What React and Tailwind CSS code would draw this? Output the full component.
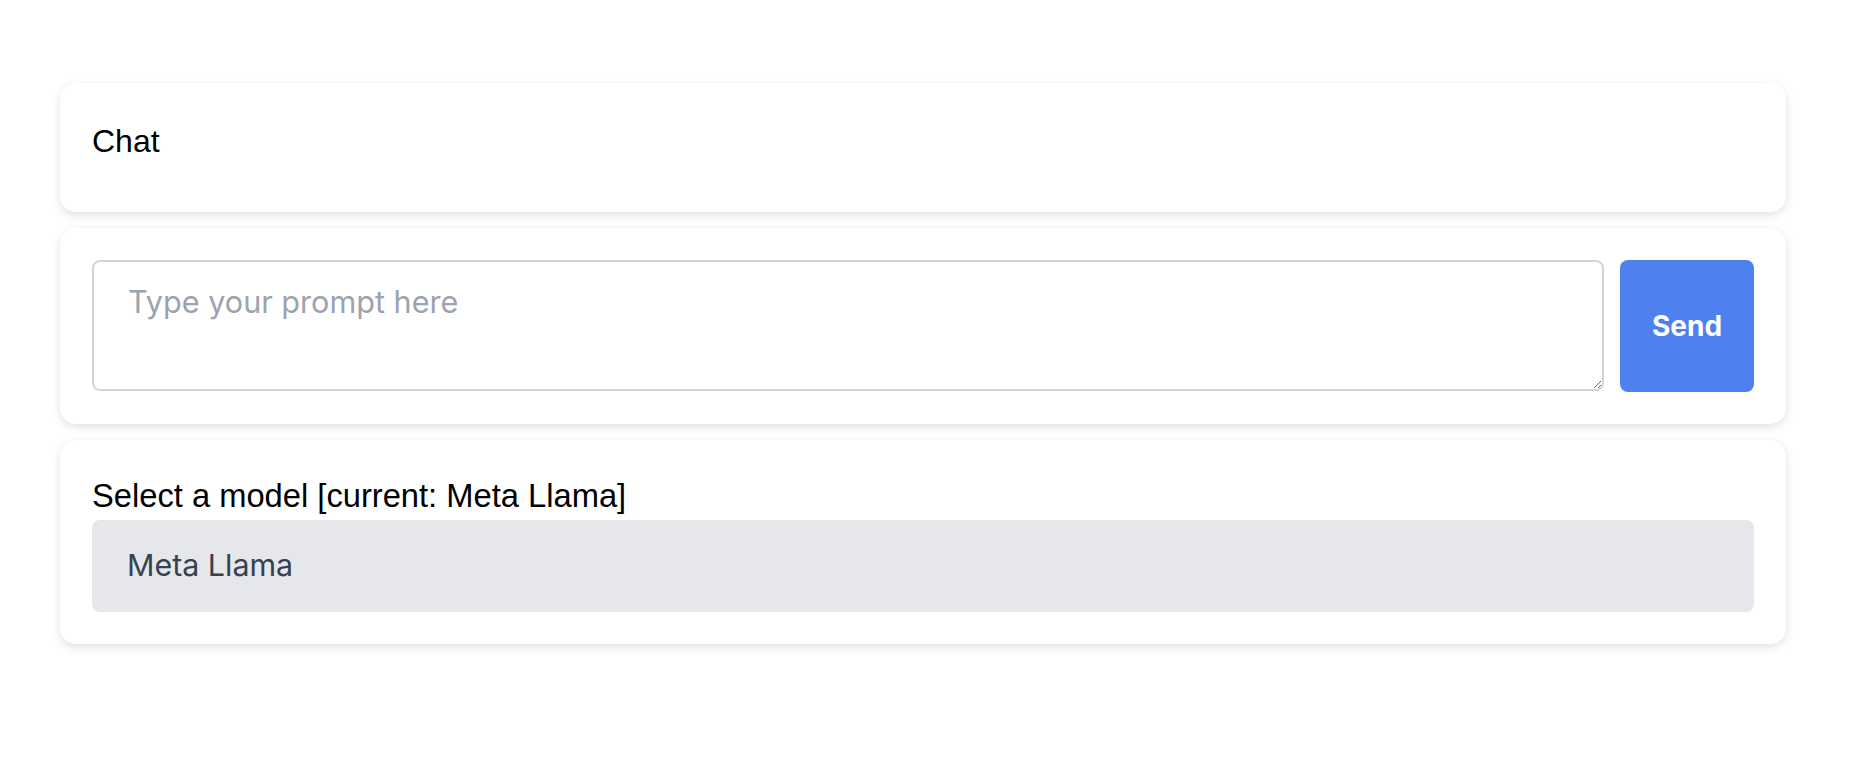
import { useState } from 'react';

const MODELS = ['Meta Llama'];

const Card = ({ className = '', children }) => (
  <div className={`bg-white rounded-2xl shadow-[0_3px_10px_rgba(0,0,0,0.12)] px-8 ${className}`}>
    {children}
  </div>
);

const App = () => {
  const [prompt, setPrompt] = useState('');
  const [model, setModel] = useState(MODELS[0]);

  return (
    <div className="min-h-screen bg-white pt-[83px] pl-[60px] font-['Liberation_Sans',Arial,sans-serif] text-black">
      <div className="w-[1726px] flex flex-col gap-4">
        {/* Header card */}
        <Card className="pt-[34px] pb-[47px]">
          <h1 className="text-[32px] leading-[48px]">Chat</h1>
        </Card>

        {/* Prompt input */}
        <Card className="py-8">
          <div className="flex gap-4">
            <textarea
              value={prompt}
              onChange={(e) => setPrompt(e.target.value)}
              placeholder="Type your prompt here"
              className="flex-1 h-[131px] rounded-lg border-2 border-[#d1d5db] pl-[34px] pt-5 text-[30.6px] leading-[40px] font-['Inter',sans-serif] text-gray-700 placeholder:text-[#9ca3af] outline-none"
            />
            <button
              type="button"
              className="w-[134px] h-[132px] rounded-lg bg-[#4f81ee] text-white font-['Inter',sans-serif] font-bold text-[28px]"
            >
              Send
            </button>
          </div>
        </Card>

        {/* Model select */}
        <Card className="pt-8 pb-8">
          <label className="block text-[32.7px] leading-[48px]">
            Select a model [current: {model}]
          </label>
          <div className="h-[92px] rounded-lg bg-[#e5e7eb] flex items-center pl-[35px]">
            <span
              className="text-[30.4px] font-['Inter',sans-serif] text-[#374151]"
              onClick={() => setModel(MODELS[0])}
            >
              {model}
            </span>
          </div>
        </Card>
      </div>
    </div>
  );
};

export default App;
